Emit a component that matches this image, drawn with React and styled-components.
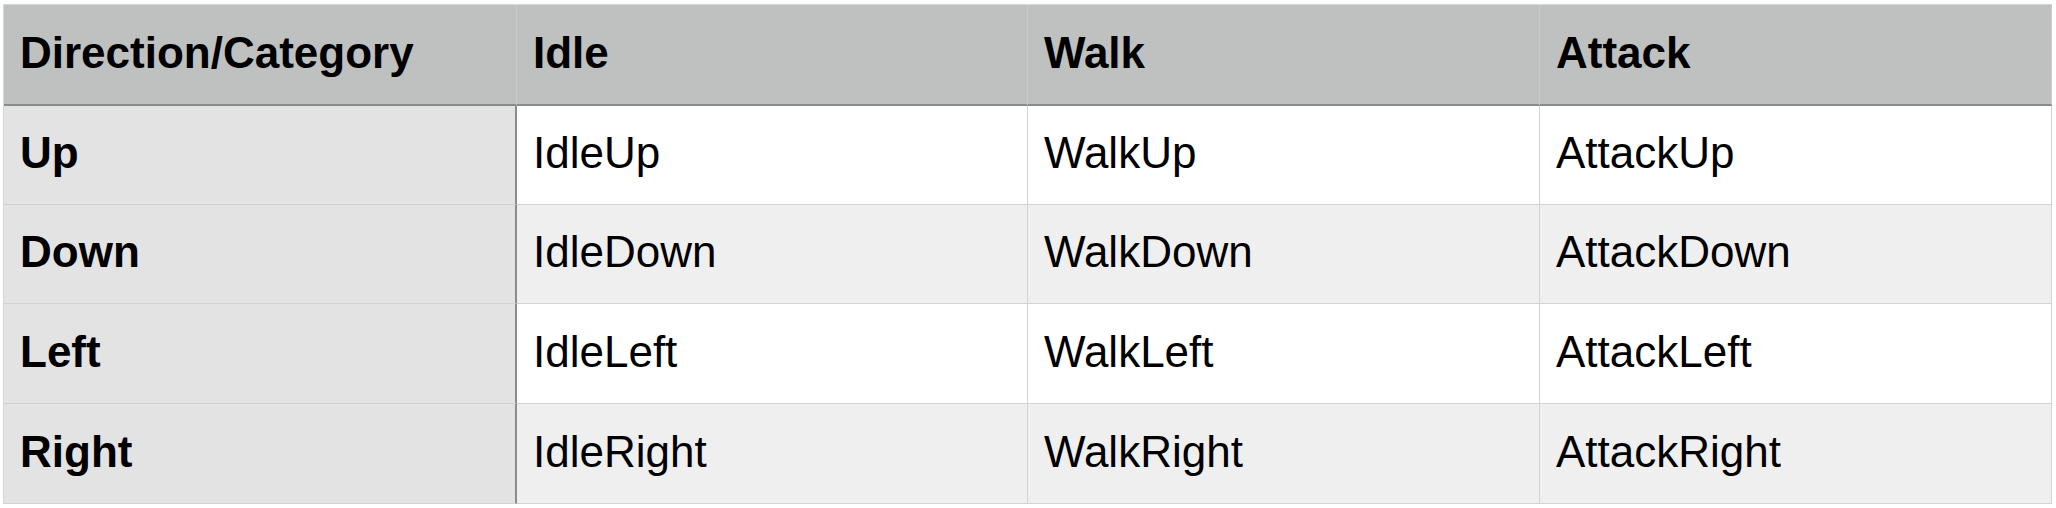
import React from 'react'
import styled, { createGlobalStyle } from 'styled-components'

const rows = [
  { name: 'Up', h: 99 },
  { name: 'Down', h: 99 },
  { name: 'Left', h: 100 },
  { name: 'Right', h: 100 }
]
const cats = ['Idle', 'Walk', 'Attack']

const App = () => {
  return (
    <Page>
      <GlobalStyle />
      <Grid>
        <HeadCell>Direction/Category</HeadCell>
        {cats.map(c => (
          <HeadCell key={c}>{c}</HeadCell>
        ))}
        {rows.map((r, i) => (
          <React.Fragment key={r.name}>
            <RowHead h={r.h}>{r.name}</RowHead>
            {cats.map(c => (
              <Cell key={c} h={r.h} shaded={i % 2 === 1}>
                {c + r.name}
              </Cell>
            ))}
          </React.Fragment>
        ))}
      </Grid>
    </Page>
  )
}

const GlobalStyle = createGlobalStyle`
  body {
    margin: 0;
    background: #ffffff;
    font-family: "Liberation Sans", Arial, Helvetica, sans-serif;
  }
`

const Page = styled.div`
  padding: 4px 0 0 3px;
`

const Grid = styled.div`
  display: grid;
  grid-template-columns: 513px 511px 512px 512px;
  width: 2049px;
  border-top: 1px solid #d6d6d6;
  border-left: 1px solid #d6d6d6;
  box-sizing: border-box;
`

const BaseCell = styled.div`
  display: flex;
  align-items: center;
  box-sizing: border-box;
  padding: 0 0 4px 16px;
  font-size: 44px;
  color: #000;
  border-right: 1px solid #d3d3d3;
  border-bottom: 1px solid #d3d3d3;
  white-space: nowrap;
  &:nth-child(4n + 1) {
    border-right: 2px solid #8c8c8c;
  }
`

const HeadCell = styled(BaseCell)`
  height: 101px;
  background: #bfc1c0;
  font-weight: 700;
  border-bottom: 2px solid #8a8a8a;
  && {
    border-right: 1px solid #c9cac9;
  }
`

const RowHead = styled(BaseCell)`
  height: ${p => p.h}px;
  background: #e2e3e2;
  font-weight: 700;
`

const Cell = styled(BaseCell)`
  height: ${p => p.h}px;
  background: ${p => (p.shaded ? '#efefef' : '#ffffff')};
`

export default App
